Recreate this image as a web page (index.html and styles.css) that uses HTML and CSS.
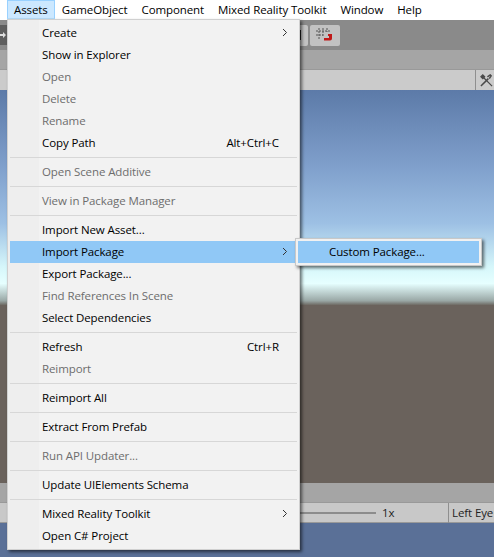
FILE: index.html
```html
<!DOCTYPE html>
<html lang="en">

<head>
    <meta charset="UTF-8">
    <title>Assets menu</title>
    <link rel="stylesheet" href="styles.css">
</head>

<body>
    <nav class="menu-bar">
        <span class="menu-title active">Assets</span>
        <span class="menu-title">GameObject</span>
        <span class="menu-title">Component</span>
        <span class="menu-title">Mixed Reality Toolkit</span>
        <span class="menu-title">Window</span>
        <span class="menu-title">Help</span>
    </nav>

    <div class="toolbar">
        <div class="tool-left">
            <svg width="8" height="10" viewBox="0 0 8 10"><path d="M0 4h3V2l3 3-3 3V6H0z" fill="#ddd"/></svg>
        </div>
        <div class="tool-group">
            <div class="tool-stub"><span class="tool-mark"></span></div>
            <div class="tool-snap">
                <svg width="18" height="15" viewBox="0 0 18 15">
                    <path d="M3 0v11M7 0v8M11 0v4M0 3h14M0 7h7" stroke="#555" fill="none" stroke-dasharray="2 1"/>
                    <path d="M12 6h4v4.500a2 2 0 0 1-2 2H8v-2.500h5V8h-1z" fill="#c01818"/>
                </svg>
            </div>
        </div>
    </div>
    <div class="tab-strip"></div>
    <div class="control-strip top-controls">
        <div class="wrench-cell">
            <svg width="13" height="13" viewBox="0 0 14 14">
                <path d="M1 13L9 5M8 3l3-2 1 1-2 3" stroke="#4a4a4a" stroke-width="1.600" fill="none"/>
                <path d="M4 4l9 9M1 3l2-2 2 2-2 2z" stroke="#4a4a4a" stroke-width="1.300" fill="#4a4a4a"/>
            </svg>
        </div>
    </div>

    <div class="scene">
        <div class="sky"></div>
        <div class="ground"></div>
    </div>

    <div class="tab-strip"></div>
    <div class="control-strip game-controls">
        <span class="scale-line"></span>
        <span class="scale-label">1x</span>
        <span class="eye-cell">Left Eye</span>
    </div>
    <div class="backdrop"></div>

    <div class="dropdown">
        <div class="row has-sub"><span>Create</span><svg class="chevron" width="6" height="9" viewBox="0 0 6 9"><path d="M1 1l3.500 3.500L1 8" /></svg></div>
        <div class="row">Show in Explorer</div>
        <div class="row off">Open</div>
        <div class="row off">Delete</div>
        <div class="row off">Rename</div>
        <div class="row"><span>Copy Path</span><span>Alt+Ctrl+C</span></div>
        <div class="sep"></div>
        <div class="row off">Open Scene Additive</div>
        <div class="sep"></div>
        <div class="row off">View in Package Manager</div>
        <div class="sep"></div>
        <div class="row">Import New Asset...</div>
        <div class="row has-sub picked"><span>Import Package</span><svg class="chevron" width="6" height="9" viewBox="0 0 6 9"><path d="M1 1l3.500 3.500L1 8" /></svg></div>
        <div class="row">Export Package...</div>
        <div class="row off">Find References In Scene</div>
        <div class="row">Select Dependencies</div>
        <div class="sep"></div>
        <div class="row"><span>Refresh</span><span>Ctrl+R</span></div>
        <div class="row off">Reimport</div>
        <div class="sep"></div>
        <div class="row">Reimport All</div>
        <div class="sep"></div>
        <div class="row">Extract From Prefab</div>
        <div class="sep"></div>
        <div class="row off">Run API Updater...</div>
        <div class="sep"></div>
        <div class="row">Update UIElements Schema</div>
        <div class="sep"></div>
        <div class="row has-sub"><span>Mixed Reality Toolkit</span><svg class="chevron" width="6" height="9" viewBox="0 0 6 9"><path d="M1 1l3.500 3.500L1 8" /></svg></div>
        <div class="row">Open C# Project</div>
    </div>

    <div class="submenu">
        <div class="sub-row">Custom Package...</div>
    </div>
</body>

</html>
```

FILE: styles.css
```css
html,
body {
    margin: 0;
    padding: 0;
}

body {
    width: 494px;
    height: 557px;
    overflow: hidden;
    position: relative;
    font-family: "Open Sans", "Noto Sans", sans-serif;
    font-size: 11.5px;
    letter-spacing: -0.1px;
    color: #000;
    background-color: #5a7097;
}

.menu-bar {
    display: flex;
    height: 20px;
    padding-left: 7px;
    background-color: #fff;
    box-sizing: border-box;
}

.menu-title {
    padding: 0 7px;
    line-height: 19px;
    height: 19px;
    box-sizing: border-box;
    white-space: nowrap;
}

.menu-title.active {
    background-color: #cce8ff;
    border: 1px solid #99d1ff;
    border-bottom-color: #b5dcf8;
    padding: 0 6px;
    line-height: 17px;
}

.toolbar {
    display: flex;
    align-items: center;
    justify-content: space-between;
    height: 30px;
    background-color: #8a8a8a;
}

.tool-left {
    width: 8px;
    height: 20px;
    background-color: #5e5e5e;
    display: flex;
    align-items: center;
}

.tool-group {
    display: flex;
    gap: 2px;
    margin-right: 154px;
}

.tool-stub,
.tool-snap {
    height: 21px;
    background-color: #c2c2c2;
    border-radius: 2px;
    display: flex;
    align-items: center;
    justify-content: center;
    box-sizing: border-box;
}

.tool-stub {
    width: 18px;
    justify-content: flex-end;
    padding-right: 7px;
}

.tool-mark {
    width: 2px;
    height: 10px;
    background-color: #222;
}

.tool-snap {
    width: 30px;
}

.tab-strip {
    height: 19px;
    background-color: #a5a5a5;
}

.control-strip {
    height: 21px;
    background-color: #cbcbcb;
    border-top: 1px solid #999;
    box-sizing: border-box;
    display: flex;
    align-items: center;
}

.top-controls {
    justify-content: flex-end;
}

.wrench-cell {
    width: 14px;
    height: 20px;
    border-left: 1px solid #8f8f8f;
    display: flex;
    align-items: center;
    padding-left: 4px;
}

.scene {
    height: 393px;
}

.sky {
    height: 215px;
    background: linear-gradient(#5c7aa8 0%, #7f9fcb 35%, #9dc0e4 62%, #d5f6fa 82%, #e6ffff 90%, #9aa8a6 98%, #6e6a64 100%);
}

.ground {
    height: 178px;
    background-color: #6a625c;
}

.game-controls {
    background-color: #c8c8c8;
    border-bottom: 1px solid #999;
    color: #222;
    padding-left: 300px;
}

.scale-line {
    width: 76px;
    height: 2px;
    background-color: #8c8c8c;
}

.scale-label {
    margin-left: 6px;
    width: 66px;
}

.eye-cell {
    border-left: 1px solid #8f8f8f;
    height: 20px;
    line-height: 20px;
    padding-left: 3px;
    white-space: nowrap;
}

.backdrop {
    height: 34px;
    background-color: #5a7097;
}

/* menu open over the editor */
.dropdown {
    position: absolute;
    left: 7px;
    top: 19px;
    width: 293px;
    height: 531px;
    box-sizing: border-box;
    padding: 2px;
    background: linear-gradient(90deg, #eeeeee 31px, #f2f2f2 31px);
    border: 1px solid #d0d0d0;
    box-shadow: 2px 2px 3px rgba(0, 0, 0, 0.55);
}

.row {
    display: flex;
    justify-content: space-between;
    align-items: center;
    height: 22px;
    box-sizing: border-box;
    padding: 0 18px 2px 32px;
    white-space: nowrap;
    color: #000;
}

.row.off {
    color: #6d6d6d;
}

.row.picked {
    background-color: #90c8f6;
}

.has-sub {
    padding-right: 9px;
}

.chevron {
    fill: none;
    stroke: #333;
    stroke-width: 1;
}

.sep {
    height: 1px;
    margin: 3px 0;
    background-color: #d7d7d7;
}

.submenu {
    position: absolute;
    left: 295px;
    top: 238px;
    width: 187px;
    height: 28px;
    box-sizing: border-box;
    padding: 2px;
    background-color: #f1f1f1;
    border: 1px solid #c8c8c8;
    box-shadow: 2px 2px 3px rgba(0, 0, 0, 0.55);
}

.sub-row {
    height: 22px;
    line-height: 22px;
    padding-left: 31px;
    background-color: #90c8f6;
    white-space: nowrap;
}
```
